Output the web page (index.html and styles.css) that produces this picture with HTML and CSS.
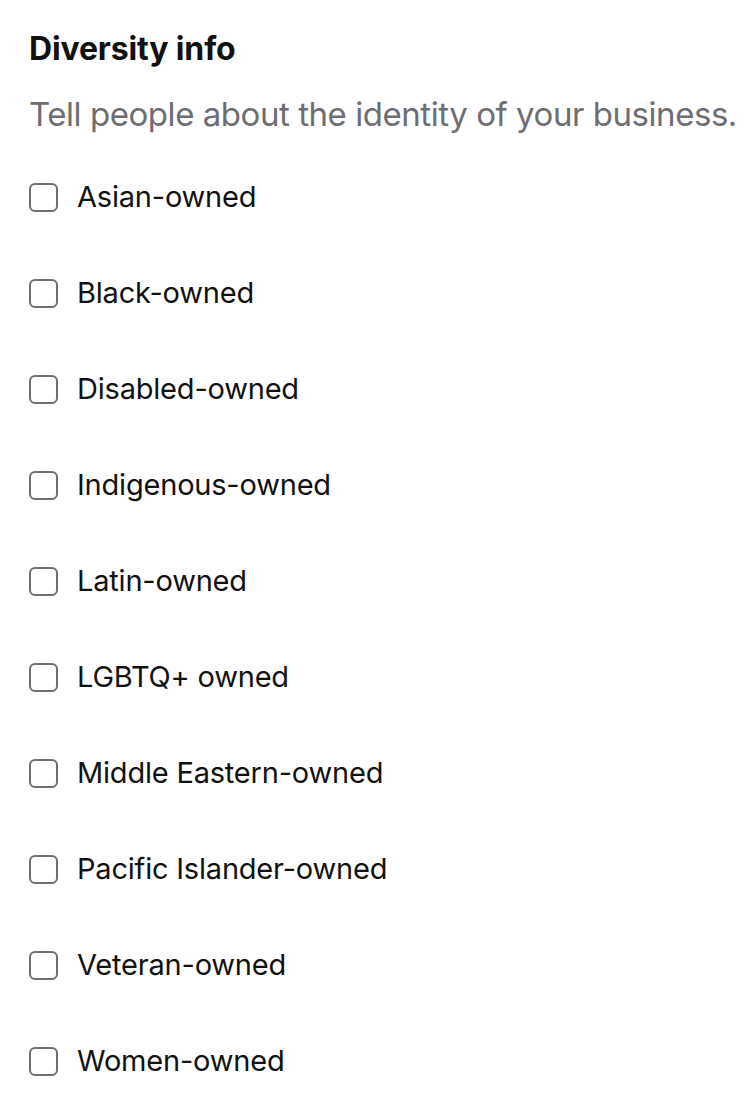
FILE: index.html
```html
<!DOCTYPE html>
<html>
<head>
  <title>Diversity info</title>
  <link rel="stylesheet" href="styles.css">
</head>
<body>
<div class="section">
  <h1 class="title">Diversity info</h1>
  <p class="subtitle">Tell people about the identity of your business.</p>

  <ul class="options">
    <li class="option"><span class="box"></span><span class="label">Asian-owned</span></li>
    <li class="option"><span class="box"></span><span class="label">Black-owned</span></li>
    <li class="option"><span class="box"></span><span class="label">Disabled-owned</span></li>
    <li class="option"><span class="box"></span><span class="label">Indigenous-owned</span></li>
    <li class="option"><span class="box"></span><span class="label">Latin-owned</span></li>
    <li class="option"><span class="box"></span><span class="label">LGBTQ+ owned</span></li>
    <li class="option"><span class="box"></span><span class="label">Middle Eastern-owned</span></li>
    <li class="option"><span class="box"></span><span class="label">Pacific Islander-owned</span></li>
    <li class="option"><span class="box"></span><span class="label">Veteran-owned</span></li>
    <li class="option"><span class="box"></span><span class="label">Women-owned</span></li>
  </ul>
</div>
</body>
</html>
```

FILE: styles.css
```css
body{
  margin: 0;
  background: #ffffff;
  font-family: "Inter", "Roboto", sans-serif;
  color: #111111;
}

.section{
  padding: 31px 0 0 29px;
}

.title{
  margin: 0;
  font-size: 32px;
  line-height: 36px;
  font-weight: 700;
  letter-spacing: -0.15px;
}

.subtitle{
  margin: 28px 0 0;
  font-size: 33px;
  line-height: 38px;
  color: #6d6d72;
  white-space: nowrap;
  letter-spacing: -0.45px;
}

.options{
  list-style: none;
  margin: 16px 0 0;
  padding: 0;
}

.option{
  height: 96px;
  display: flex;
  align-items: center;
}

.box{
  width: 25px;
  height: 25px;
  border: 2px solid #6e6e73;
  border-radius: 6px;
  margin-right: 19px;
  flex-shrink: 0;
}

.label{
  font-size: 29px;
  line-height: 36px;
  letter-spacing: -0.2px;
}
```
